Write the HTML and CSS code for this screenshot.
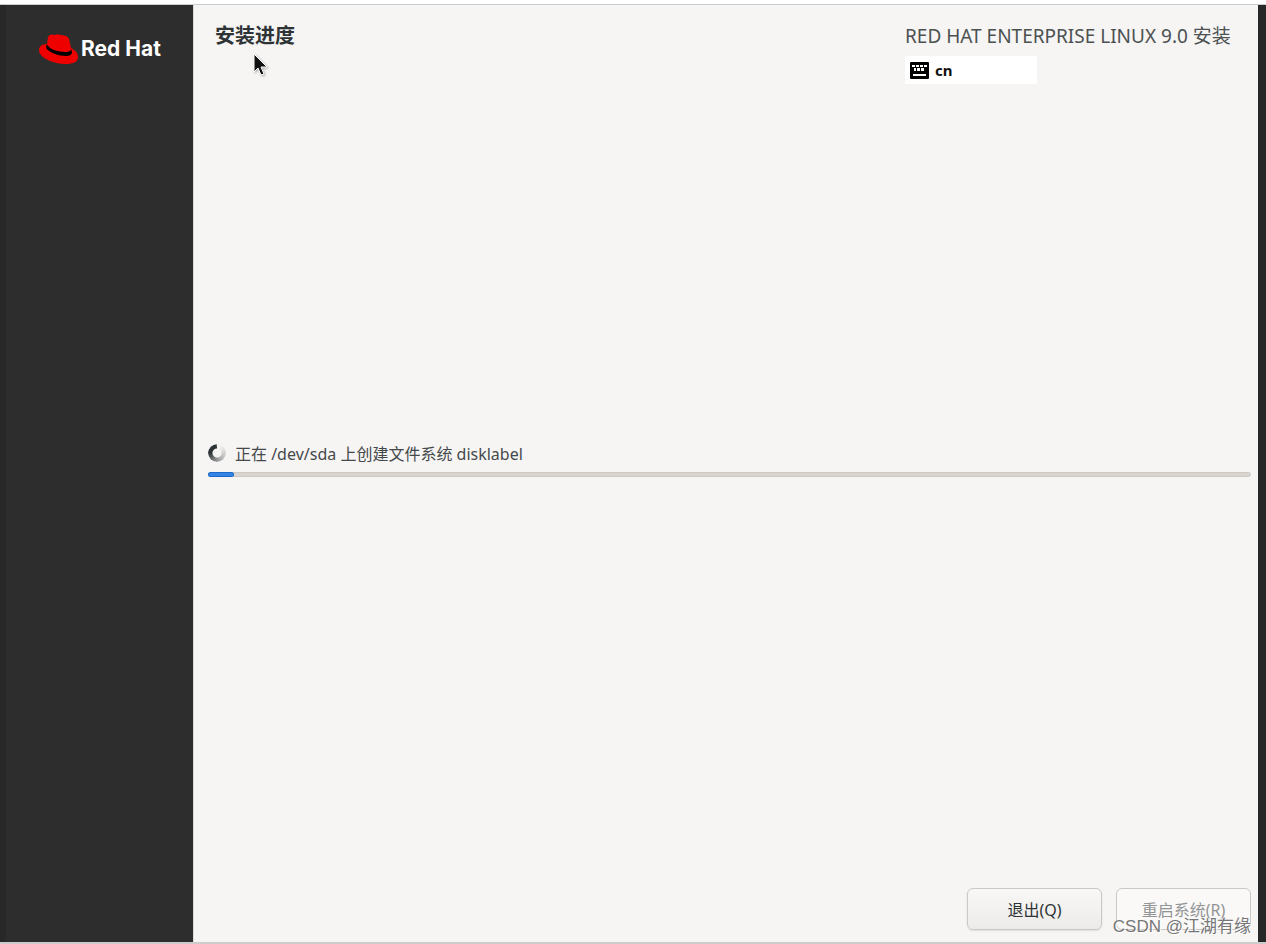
FILE: index.html
```html
<!DOCTYPE html>
<html lang="zh-CN">
<head>
  <meta charset="utf-8">
  <title>安装进度</title>
  <link rel="stylesheet" href="styles.css">
</head>
<body>
  <div class="screen">
    <aside class="sidebar">
      <div class="logo">
        <svg class="hat" viewBox="0 0 40 32" aria-hidden="true">
          <path fill="#e00" d="M9 11C5 11 1 13 1 17C1 25 16 31 28 31C35 31 40 29 40 24C40 20 37 17 33 15L31 6C30 3 26 2 22 2C21 1 19 1 17 2C15 1 11 1 10 4Z"/>
          <path fill="#000" d="M9 11C10 16 20 19 28 19C31 19 33 18 33 16L34 19C34 22 31 23 28 23C19 23 8 18 8 14Z"/>
        </svg>
        <span>Red Hat</span>
      </div>
    </aside>
    <main class="content">
      <header class="header">
        <h1>安装进度</h1>
        <div class="product">
          <h2>RED HAT ENTERPRISE LINUX 9.0 安装</h2>
          <button class="keyboard" type="button">
            <svg width="19" height="17" viewBox="0 0 19 17" aria-hidden="true">
              <rect width="19" height="17" rx="1"/>
              <path fill="#fff" d="M2 3h3v2H2zM6 3h3v2H6zM10 3h3v2h-3zM14 3h3v2h-3zM4 6h2v3H4zM7 6h3v3H7zM11 6h3v3h-3zM3 12h13v2H3z"/>
            </svg>
            cn
          </button>
        </div>
      </header>
      <section class="status">
        <div class="status-line">
          <span class="spinner"></span>
          <label for="progress">正在 /dev/sda 上创建文件系统 disklabel</label>
        </div>
        <progress id="progress" max="1000" value="23"></progress>
      </section>
      <footer class="actions">
        <button class="btn" type="button">退出(Q)</button>
        <button class="btn" type="button" disabled>重启系统(R)</button>
      </footer>
    </main>
    <svg class="cursor" width="18" height="26" viewBox="0 0 18 26" aria-hidden="true">
      <path fill="#111" stroke="#fff" d="M2 2V20L6 16L9 23L12 22L9 15H15Z"/>
    </svg>
    <span class="watermark">CSDN @江湖有缘</span>
  </div>
</body>
</html>
```
FILE: styles.css
```css
* {
  box-sizing: border-box;
}
body {
  margin: 0;
  padding-top: 4px;
  background: #fff;
  font-family: "Noto Sans", "Noto Sans CJK SC", sans-serif;
  font-size: 16px;
  color: #2e3436;
}
.screen {
  position: relative;
  display: flex;
  min-height: calc(100vh - 4px);
  background: #f6f5f4;
  border-top: 1px solid #ccc;
  border-bottom: 2px solid #ccc;
}
.sidebar {
  width: 193px;
  flex: none;
  background: #2d2d2d;
  border-left: 6px solid #282828;
}
.logo {
  display: flex;
  align-items: center;
  gap: 3px;
  padding: 28px 0 0 32px;
  color: #fff;
  font-family: Inter, sans-serif;
  font-size: 21px;
  font-weight: 700;
  line-height: 32px;
  white-space: nowrap;
}
.hat {
  width: 40px;
  height: 32px;
}
.content {
  flex: 1;
  min-width: 0;
  display: flex;
  flex-direction: column;
  border-left: 1px solid #dddbd8;
  border-right: 8px solid #282828;
}
.header {
  flex: 1;
  display: flex;
  justify-content: space-between;
  padding: 17px 22px 0 21px;
}
h1, h2 {
  margin: 0;
  font-size: 20px;
  line-height: 28px;
}
.product {
  min-width: 331px;
}
h2 {
  font-size: 19px;
  font-weight: 400;
  color: #4c5152;
}
.keyboard {
  display: flex;
  align-items: center;
  gap: 6px;
  width: 132px;
  height: 28px;
  margin-top: 6px;
  padding: 0 5px;
  border: none;
  background: #fff;
  color: #111;
  font: bold 15px "Noto Sans", sans-serif;
}
.status {
  padding: 0 7px 37px 14px;
}
.status-line {
  display: flex;
  align-items: center;
  gap: 9px;
  height: 28px;
  margin-bottom: 5px;
  color: #45494b;
}
.spinner {
  width: 18px;
  height: 18px;
  border-radius: 50%;
  background: conic-gradient(transparent 20deg, #ddd 70deg, #aaa 160deg, #777 210deg, #2e3436 270deg, #2e3436 355deg, transparent 360deg);
  -webkit-mask: radial-gradient(circle, transparent 4px, #000 5px);
  mask: radial-gradient(circle, transparent 4px, #000 5px);
}
progress {
  display: block;
  width: 100%;
  height: 5px;
  appearance: none;
  border: none;
}
progress::-webkit-progress-bar {
  background: #d8d4d0;
  border: 1px solid #cdc7c2;
  border-radius: 3px;
}
progress::-webkit-progress-value {
  background: #3584e4;
  border-radius: 2px;
  box-shadow: 0 0 0 1px #1b6acb;
}
.actions {
  flex: 1;
  display: flex;
  justify-content: flex-end;
  align-items: flex-end;
  gap: 14px;
  padding: 0 7px 12px;
}
.btn {
  width: 135px;
  height: 42px;
  border: 1px solid #cdc7c2;
  border-radius: 6px;
  background: linear-gradient(#f8f8f7, #edebe9);
  box-shadow: 0 1px 2px rgba(0, 0, 0, 0.1);
  color: #2e3436;
  font-family: inherit;
  font-size: 16px;
}
.btn:disabled {
  background: #faf9f8;
  box-shadow: none;
  color: #929595;
}
.cursor {
  position: absolute;
  left: 252px;
  top: 47px;
  filter: drop-shadow(1px 1px 1px rgba(0, 0, 0, 0.3));
}
.watermark {
  position: absolute;
  right: 15px;
  bottom: 3px;
  font-family: "Liberation Sans", "Noto Sans CJK SC", sans-serif;
  font-size: 17px;
  line-height: 24px;
  color: #777;
  text-shadow: 1px 1px 0 #fff;
}
```
